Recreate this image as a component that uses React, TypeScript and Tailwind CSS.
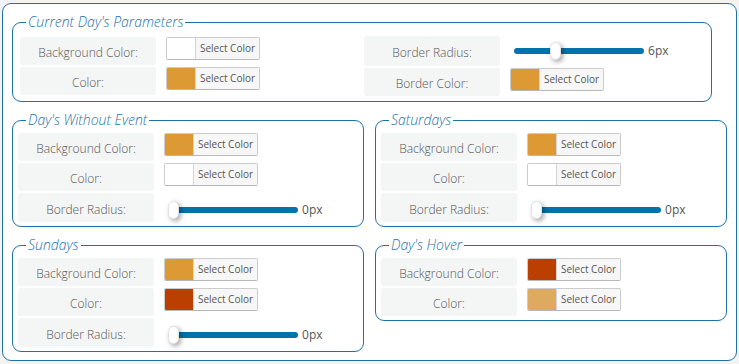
import React from "react";

const FONT = { fontFamily: "'Open Sans', 'Liberation Sans', sans-serif" };

type Row =
  | { label: string; kind: "color"; swatch: string }
  | { label: string; kind: "slider"; value: number; max: number };

function Picker({ swatch }: { swatch: string }) {
  return (
    <div className="flex h-[23px] w-[94px] overflow-hidden rounded-[2px] border border-[#cccccc] border-b-[#b8b8b8]">
      <div className={`w-[28px] shrink-0 ${swatch}`} />
      <div className="flex flex-1 items-center justify-center border-l border-[#d4d4d4] bg-[#f7f7f7] text-[10px] text-[#555555]">
        Select Color
      </div>
    </div>
  );
}

function Slider({ value, max }: { value: number; max: number }) {
  // thumb travels over the track minus its own width
  const left = (value / max) * (130 - 11);
  return (
    <div className="flex items-center">
      <div className="relative flex h-[18px] w-[130px] items-center">
        <div className="h-[6px] w-full rounded-full bg-[#0073aa]" />
        <div
          className="absolute top-0 h-[18px] w-[11px] rounded-[6px] border border-[#e2e2e2] bg-white shadow-[2px_2px_5px_rgba(0,0,0,0.35)]"
          style={{ left }}
        />
      </div>
      <span className="ml-[4px] text-[12px] text-[#555555]">{value}px</span>
    </div>
  );
}

function Label({ text }: { text: string }) {
  return (
    <div className="flex w-[136px] shrink-0 items-center justify-center rounded-[3px] bg-[#f4f5f5] pt-[4px] text-[12px] font-light text-[#555555]">
      {text}
    </div>
  );
}

function FieldRow({ row, tall }: { row: Row; tall?: boolean }) {
  return (
    <div className={`flex ${tall ? "h-[29px]" : "h-[28px]"}`}>
      <Label text={row.label} />
      {row.kind === "color" ? (
        <div className="ml-[10px]">
          <Picker swatch={row.swatch} />
        </div>
      ) : (
        <div className="ml-[14px] flex items-center pt-[4px]">
          <Slider value={row.value} max={row.max} />
        </div>
      )}
    </div>
  );
}

function Legend({ title, className }: { title: string; className: string }) {
  return (
    <legend className={`px-[2px] text-[14px] leading-[20px] font-light italic text-[#1f72a9] ${className}`}>
      {title}
    </legend>
  );
}

function Group({ title, rows }: { title: string; rows: Row[] }) {
  return (
    <fieldset className="rounded-[9px] border border-[#1f72a9] px-[5px] pt-[3px] pb-[4px]">
      <Legend title={title} className="ml-[8px]" />
      <div className="flex flex-col gap-[2px]">
        {rows.map((r, i) => (
          <FieldRow key={i} row={r} tall={r.kind === "slider"} />
        ))}
      </div>
    </fieldset>
  );
}

const ORANGE = "bg-[#dd9933]";
const WHITE = "bg-white";
const RUST = "bg-[#bb4000]";
const SAND = "bg-[#ddaa5f]";

export default function App() {
  return (
    <div className="min-h-screen bg-[#f3f3f3] pt-[3px] pl-[2px]" style={FONT}>
      <div className="w-[735px] rounded-[9px] border border-[#1f72a9] bg-white px-[9px] pt-[8px] pb-[8px]">
        {/* Current day */}
        <fieldset className="w-[700px] rounded-[9px] border border-[#1f72a9] px-[7px] pt-[4px] pb-[5px]">
          <Legend title="Current Day's Parameters" className="ml-[6px]" />
          <div className="flex">
            <div className="mt-[1px] flex w-[344px] flex-col gap-[2px]">
              <FieldRow row={{ label: "Background Color:", kind: "color", swatch: WHITE }} />
              <FieldRow row={{ label: "Color:", kind: "color", swatch: ORANGE }} />
            </div>
            <div className="flex flex-col gap-[2px]">
              <div className="flex h-[30px]">
                <Label text="Border Radius:" />
                <div className="ml-[14px] flex items-center">
                  <Slider value={6} max={20} />
                </div>
              </div>
              <FieldRow row={{ label: "Border Color:", kind: "color", swatch: ORANGE }} />
            </div>
          </div>
        </fieldset>

        <div className="mt-[8px] grid grid-cols-[352px_352px] items-start gap-x-[11px] gap-y-[8px]">
          <Group
            title="Day's Without Event"
            rows={[
              { label: "Background Color:", kind: "color", swatch: ORANGE },
              { label: "Color:", kind: "color", swatch: WHITE },
              { label: "Border Radius:", kind: "slider", value: 0, max: 20 },
            ]}
          />
          <Group
            title="Saturdays"
            rows={[
              { label: "Background Color:", kind: "color", swatch: ORANGE },
              { label: "Color:", kind: "color", swatch: WHITE },
              { label: "Border Radius:", kind: "slider", value: 0, max: 20 },
            ]}
          />
          <Group
            title="Sundays"
            rows={[
              { label: "Background Color:", kind: "color", swatch: ORANGE },
              { label: "Color:", kind: "color", swatch: RUST },
              { label: "Border Radius:", kind: "slider", value: 0, max: 20 },
            ]}
          />
          <Group
            title="Day's Hover"
            rows={[
              { label: "Background Color:", kind: "color", swatch: RUST },
              { label: "Color:", kind: "color", swatch: SAND },
            ]}
          />
        </div>
      </div>
    </div>
  );
}
